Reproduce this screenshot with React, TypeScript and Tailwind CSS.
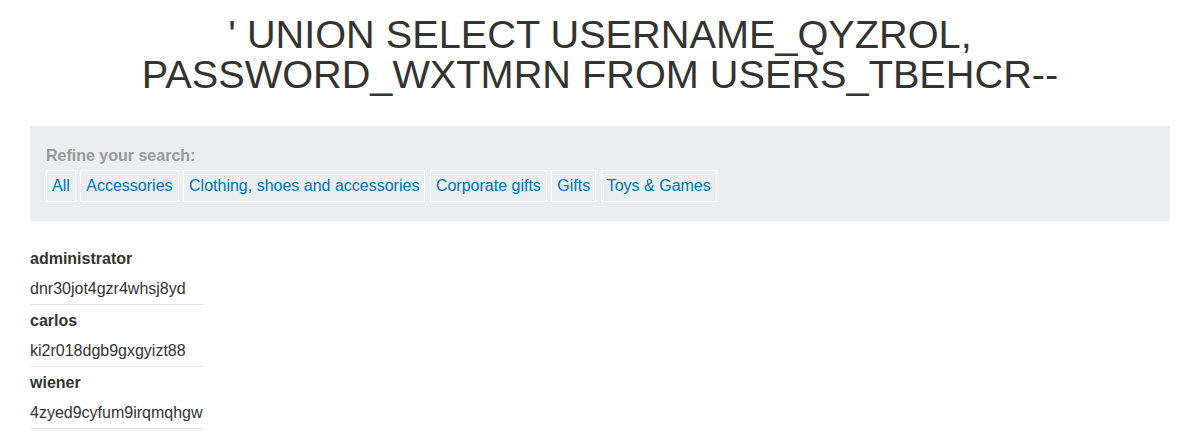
import React from 'react';

const categories = [
  'All',
  'Accessories',
  'Clothing, shoes and accessories',
  'Corporate gifts',
  'Gifts',
  'Toys & Games',
];

const users = [
  { name: 'administrator', password: 'dnr30jot4gzr4whsj8yd' },
  { name: 'carlos', password: 'ki2r018dgb9gxgyizt88' },
  { name: 'wiener', password: '4zyed9cyfum9irqmqhgw' },
];

export default function App() {
  return (
    <div className="h-[439px] overflow-hidden bg-white pl-[30px] pr-[12px] pt-[14px] font-['Liberation_Sans',Arial,sans-serif] text-[16px] text-[#333332]">
      <h1 className="mx-auto text-center text-[39.7px] leading-[40px] font-normal">
        ' UNION SELECT USERNAME_QYZROL,
        <br />
        PASSWORD_WXTMRN FROM USERS_TBEHCR--
      </h1>

      <section className="mt-[32px] bg-[#eaeef1] px-4 pt-[18px] pb-[19px]">
        <div className="h-6 leading-6 font-bold text-[#999999]">Refine your search:</div>
        <div className="mt-[2px] flex gap-[4.5px]">
          {categories.map((c) => (
            <a
              key={c}
              href="#"
              className="h-8 border border-white px-[5px] leading-[30px] text-[#0071bc]"
            >
              {c}
            </a>
          ))}
        </div>
      </section>

      <table className="mt-[21px] border-collapse">
        <tbody>
          {users.map((u) => (
            <React.Fragment key={u.name}>
              <tr>
                <th className="h-[31px] p-0 pt-[2px] text-left align-middle font-bold">{u.name}</th>
              </tr>
              <tr>
                <td className="h-[31px] border-b border-[#e6e6e6] p-0 pt-[2px] align-middle">{u.password}</td>
              </tr>
            </React.Fragment>
          ))}
        </tbody>
      </table>
    </div>
  );
}
